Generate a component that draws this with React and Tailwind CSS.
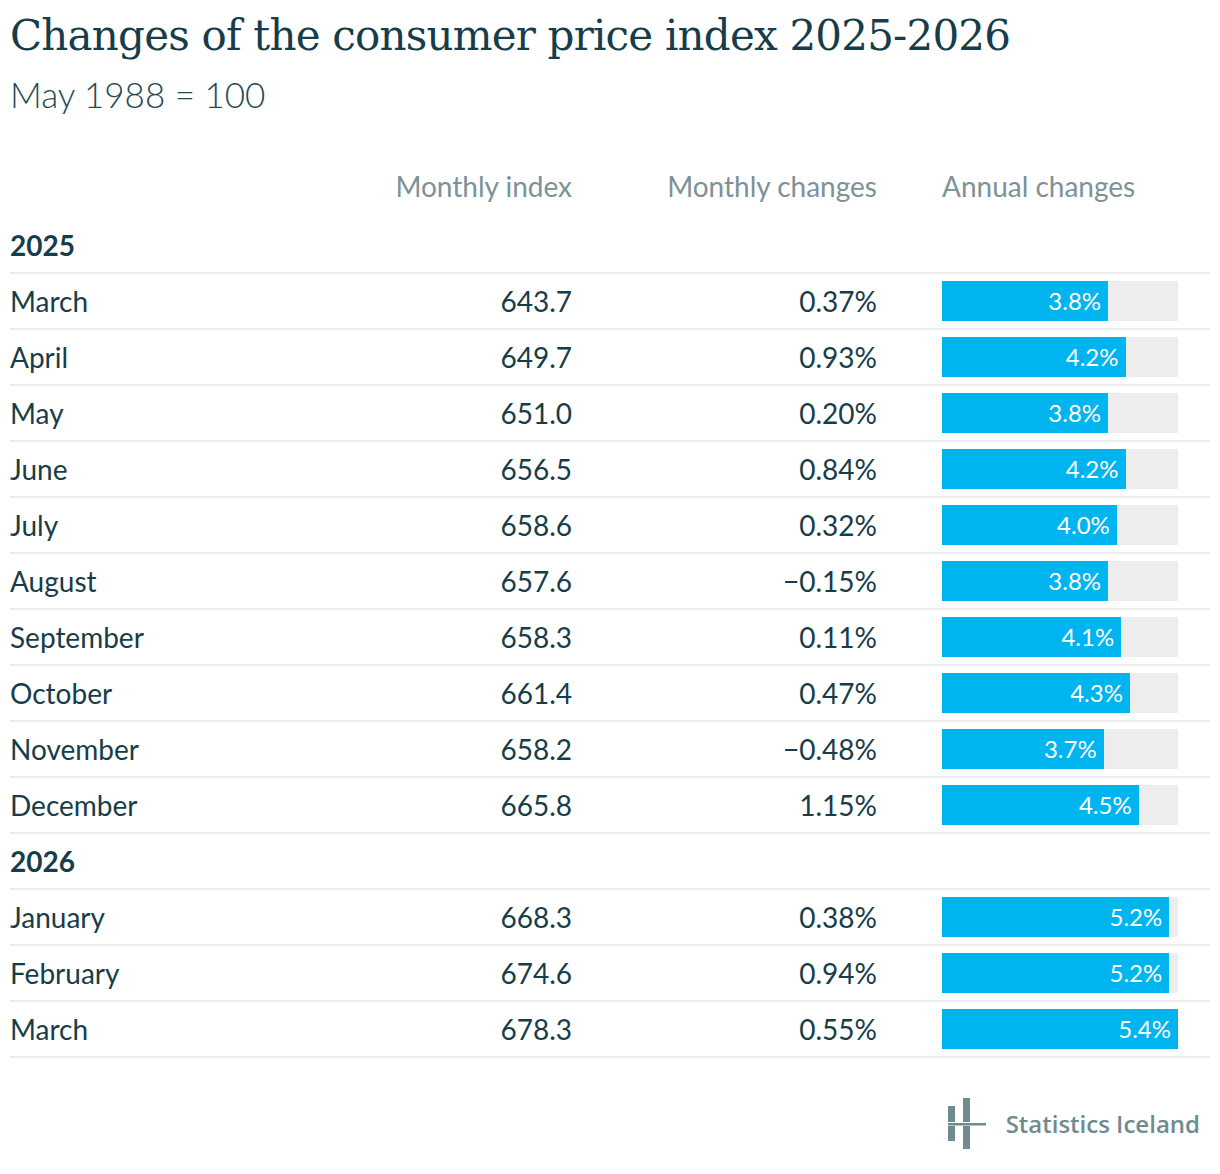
import React from 'react'

const rows2025 = [
  ['March', '643.7', '0.37%', 3.8],
  ['April', '649.7', '0.93%', 4.2],
  ['May', '651.0', '0.20%', 3.8],
  ['June', '656.5', '0.84%', 4.2],
  ['July', '658.6', '0.32%', 4.0],
  ['August', '657.6', '\u22120.15%', 3.8],
  ['September', '658.3', '0.11%', 4.1],
  ['October', '661.4', '0.47%', 4.3],
  ['November', '658.2', '\u22120.48%', 3.7],
  ['December', '665.8', '1.15%', 4.5],
]

const rows2026 = [
  ['January', '668.3', '0.38%', 5.2],
  ['February', '674.6', '0.94%', 5.2],
  ['March', '678.3', '0.55%', 5.4],
]

const MAX = 5.4

function YearRow({ year }) {
  return (
    <div className="h-[56px] border-b-2 border-[#ececec] flex items-center">
      <span className="text-[28px] font-bold text-[#163d49]">{year}</span>
    </div>
  )
}

function DataRow({ month, index, change, annual }) {
  return (
    <div className="h-[56px] border-b-2 border-[#ececec] grid grid-cols-[300px_262px_305px_65px_236px] items-center text-[28px] text-[#163d49]">
      <span>{month}</span>
      <span className="text-right">{index}</span>
      <span className="text-right">{change}</span>
      <span />
      <div className="h-[40px] bg-[#ededed] flex">
        <div
          className="h-full bg-[#00b5ef] flex items-center justify-end pr-[7px] text-[24px] text-white"
          style={{ width: `${(annual / MAX) * 100}%` }}
        >
          {annual.toFixed(1)}%
        </div>
      </div>
    </div>
  )
}

function Logo() {
  return (
    <svg width="38" height="52" viewBox="0 0 38 52" className="block">
      <g fill="#6f8b90">
        <rect x="0" y="8" width="7" height="16" />
        <rect x="0" y="28" width="7" height="15" />
        <rect x="15" y="0" width="7" height="24" />
        <rect x="15" y="28" width="7" height="23" />
        <rect x="0" y="25" width="38" height="2.5" />
      </g>
    </svg>
  )
}

export default function App() {
  return (
    <div className="w-[1220px] h-[1174px] bg-white px-[10px] font-['Lato',sans-serif]">
      <h1 className="h-[72px] leading-[72px] text-[42px] text-[#163d49] font-['DejaVu_Serif',serif] tracking-[-0.8px]">
        Changes of the consumer price index 2025-2026
      </h1>
      <p className="h-[44px] leading-[44px] text-[35px] font-light text-[#244a55]">May 1988 = 100</p>
      <div className="h-[46px]" />

      <div className="h-[56px] pb-[8px] grid grid-cols-[300px_262px_305px_65px_236px] items-center text-[28px] text-[#7d9297]">
        <span />
        <span className="text-right">Monthly index</span>
        <span className="text-right">Monthly changes</span>
        <span />
        <span>Annual changes</span>
      </div>

      <YearRow year="2025" />
      {rows2025.map(([m, i, c, a]) => (
        <DataRow key={'25' + m} month={m} index={i} change={c} annual={a} />
      ))}
      <YearRow year="2026" />
      {rows2026.map(([m, i, c, a]) => (
        <DataRow key={'26' + m} month={m} index={i} change={c} annual={a} />
      ))}

      <div className="flex justify-end items-center pt-[40px] pr-[10px] gap-[20px]">
        <Logo />
        <span className="text-[24px] font-semibold text-[#6f8b90] font-['Open_Sans',sans-serif]">
          Statistics Iceland
        </span>
      </div>
    </div>
  )
}
